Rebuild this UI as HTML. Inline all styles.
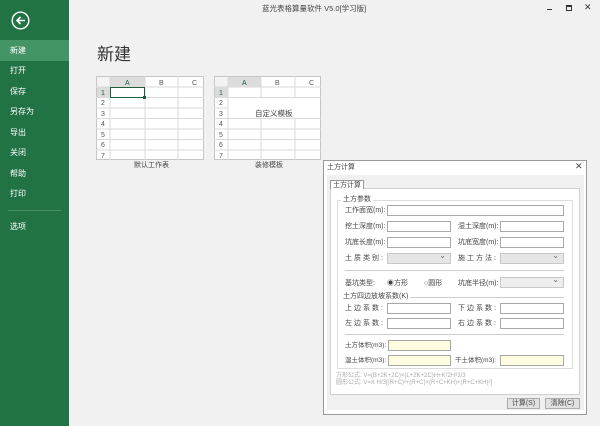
<!DOCTYPE html>
<html><head><meta charset="utf-8"><style>
*{margin:0;padding:0;box-sizing:border-box}
body{width:600px;height:426px;overflow:hidden;background:#f1f1f1;font-family:"Liberation Sans","Noto Sans CJK SC",sans-serif;position:relative;color:#333}
.a{position:absolute}
.side{left:0;top:0;width:69px;height:426px;background:#217346}
.mi{position:absolute;left:10px;font-size:8px;color:#fff;line-height:10px}
.t{font-size:7px;white-space:nowrap;line-height:9px;color:#444}
.in{position:absolute;height:11px;background:#fff;border:1px solid #a8a8a8}
.sel{position:absolute;height:11px;background:#e6e6e6;border:1px solid #c8c8c8}
.sel:after{content:"⌄";position:absolute;right:4px;top:-3px;font-size:8px;color:#666}
.y{background:#fffde0}
</style></head><body>
<div class="a side"></div>
<div class="a" style="left:0;top:40px;width:69px;height:21px;background:#439467"></div>
<svg class="a" style="left:11px;top:11px" width="19" height="19" viewBox="0 0 19 19"><circle cx="9.5" cy="9.5" r="8.3" fill="none" stroke="#fff" stroke-width="1.4"/><path d="M14 9.5H6M9.5 6L6 9.5 9.5 13" fill="none" stroke="#fff" stroke-width="1.6"/></svg>
<div class="mi" style="top:46px">新建</div>
<div class="mi" style="top:66px">打开</div>
<div class="mi" style="top:87px">保存</div>
<div class="mi" style="top:107px">另存为</div>
<div class="mi" style="top:128px">导出</div>
<div class="mi" style="top:148px">关闭</div>
<div class="mi" style="top:169px">帮助</div>
<div class="mi" style="top:189px">打印</div>
<div class="a" style="left:8px;top:210px;width:53px;height:1px;background:#4a8f68"></div>
<div class="mi" style="top:222px">选项</div>
<div class="a t" style="left:262px;top:4px;font-size:7.5px">蓝光表格算量软件 V5.0[学习版]</div>
<div class="a" style="left:547px;top:9px;width:5px;height:1px;background:#333"></div>
<div class="a" style="left:566px;top:5px;width:6px;height:6px;border:1px solid #333;border-top-width:2px"></div>
<div class="a" style="left:584px;top:2px;font-size:9px;color:#333">✕</div>
<div class="a" style="left:97px;top:40px;font-size:17px;color:#333">新建</div>

<svg class="a" style="left:96px;top:76px" width="108" height="84">
<rect x="0.5" y="0.5" width="107" height="83" fill="#fff" stroke="#c6c6c6"/>
<rect x="1" y="1" width="13" height="10" fill="#f3f3f3"/>
<rect x="14" y="1" width="35" height="10" fill="#dcdcdc"/>
<rect x="1" y="11" width="13" height="10" fill="#dcdcdc"/>
<g stroke="#dadada"><line x1="14" y1="0" x2="14" y2="84"/><line x1="49" y1="0" x2="49" y2="84"/><line x1="82" y1="0" x2="82" y2="84"/>
<line x1="0" y1="11" x2="108" y2="11"/><line x1="0" y1="21.5" x2="108" y2="21.5"/><line x1="0" y1="32" x2="108" y2="32"/><line x1="0" y1="42.5" x2="108" y2="42.5"/><line x1="0" y1="53" x2="108" y2="53"/><line x1="0" y1="63.5" x2="108" y2="63.5"/><line x1="0" y1="74" x2="108" y2="74"/></g>
<rect x="14.5" y="11.5" width="34" height="10" fill="none" stroke="#1e5c3a"/><rect x="47" y="20" width="3" height="3" fill="#1e5c3a"/>
<g font-size="7" fill="#555" font-family="Liberation Sans"><text x="29" y="9" fill="#1e5c3a">A</text><text x="63" y="9">B</text><text x="96" y="9">C</text>
<text x="5" y="19" fill="#1e5c3a">1</text><text x="5" y="29">2</text><text x="5" y="40">3</text><text x="5" y="50">4</text><text x="5" y="61">5</text><text x="5" y="71">6</text><text x="5" y="82">7</text></g></svg>
<svg class="a" style="left:214px;top:76px" width="107" height="84">
<rect x="0.5" y="0.5" width="106" height="83" fill="#fff" stroke="#c6c6c6"/>
<rect x="1" y="1" width="13" height="10" fill="#f3f3f3"/>
<rect x="14" y="1" width="33" height="10" fill="#dcdcdc"/>
<rect x="1" y="11" width="13" height="10" fill="#dcdcdc"/>
<g stroke="#dadada"><line x1="14" y1="0" x2="14" y2="84"/><line x1="47" y1="0" x2="47" y2="84"/><line x1="81" y1="0" x2="81" y2="84"/>
<line x1="0" y1="11" x2="107" y2="11"/><line x1="0" y1="21.5" x2="107" y2="21.5"/><line x1="0" y1="32" x2="14" y2="32"/><line x1="0" y1="42.5" x2="107" y2="42.5"/><line x1="0" y1="53" x2="107" y2="53"/><line x1="0" y1="63.5" x2="107" y2="63.5"/><line x1="0" y1="74" x2="107" y2="74"/></g>
<rect x="15" y="22" width="91" height="20" fill="#fff"/>
<g font-size="7" fill="#555" font-family="Liberation Sans"><text x="28" y="9" fill="#1e5c3a">A</text><text x="61" y="9">B</text><text x="95" y="9">C</text>
<text x="5" y="19" fill="#1e5c3a">1</text><text x="5" y="29">2</text><text x="5" y="40">3</text><text x="5" y="50">4</text><text x="5" y="61">5</text><text x="5" y="71">6</text><text x="5" y="82">7</text></g></svg>
<div class="a t" style="left:255px;top:109px;font-size:7.5px">自定义模板</div>
<div class="a t" style="left:134px;top:161px">默认工作表</div>
<div class="a t" style="left:255px;top:161px">装修模板</div>

<div class="a" style="left:323px;top:160px;width:264px;height:255px;background:#fff;border:1px solid #999"></div>
<div class="a t" style="left:327px;top:163px">土方计算</div>
<div class="a" style="left:575px;top:161px;font-size:9px;color:#444">✕</div>
<div class="a" style="left:327px;top:175px;width:257px;height:235px;background:#f0f0f0"></div>
<div class="a" style="left:330px;top:188px;width:250px;height:207px;background:#fff;border:1px solid #d0d0d0"></div>
<div class="a t" style="left:330px;top:180px;border:1px solid #999;border-bottom:none;padding:0 2px;background:#fff;height:9px">土方计算</div>
<div class="a" style="left:337px;top:200px;width:236px;height:169px;border:1px solid #dcdcdc"></div>
<div class="a t" style="left:341px;top:195px;background:#fff;padding:0 2px">土方参数</div>
<div class="a t" style="left:345px;top:206px">工作面宽(m):</div><div class="in" style="left:387px;top:205px;width:177px"></div>
<div class="a t" style="left:345px;top:222px">挖土深度(m):</div><div class="in" style="left:387px;top:221px;width:64px"></div>
<div class="a t" style="left:458px;top:222px">湿土深度(m):</div><div class="in" style="left:500px;top:221px;width:64px"></div>
<div class="a t" style="left:345px;top:238px">坑底长度(m):</div><div class="in" style="left:387px;top:237px;width:64px"></div>
<div class="a t" style="left:458px;top:238px">坑底宽度(m):</div><div class="in" style="left:500px;top:237px;width:64px"></div>
<div class="a t" style="left:345px;top:254px;letter-spacing:2px">土质类别:</div><div class="sel" style="left:387px;top:253px;width:64px"></div>
<div class="a t" style="left:458px;top:254px;letter-spacing:2px">施工方法:</div><div class="sel" style="left:500px;top:253px;width:64px"></div>
<div class="a" style="left:345px;top:270px;width:219px;height:1px;background:#ccc"></div>
<div class="a t" style="left:345px;top:279px">基坑类型:</div>
<div class="a t" style="left:387px;top:279px">◉方形</div>
<div class="a t" style="left:424px;top:279px">○圆形</div>
<div class="a t" style="left:458px;top:279px">坑底半径(m):</div><div class="sel" style="left:500px;top:277px;width:64px;background:#eee"></div>
<div class="a" style="left:345px;top:297px;width:219px;height:1px;background:#ccc"></div>
<div class="a t" style="left:343px;top:292px;background:#fff;padding-right:2px">土方四边放坡系数(K)</div>
<div class="a t" style="left:345px;top:304px;letter-spacing:2px">上边系数:</div><div class="in" style="left:387px;top:303px;width:64px"></div>
<div class="a t" style="left:458px;top:304px;letter-spacing:2px">下边系数:</div><div class="in" style="left:500px;top:303px;width:64px"></div>
<div class="a t" style="left:345px;top:319px;letter-spacing:2px">左边系数:</div><div class="in" style="left:387px;top:318px;width:64px"></div>
<div class="a t" style="left:458px;top:319px;letter-spacing:2px">右边系数:</div><div class="in" style="left:500px;top:318px;width:64px"></div>
<div class="a" style="left:345px;top:334px;width:219px;height:1px;background:#ccc"></div>
<div class="a t" style="left:345px;top:341px;font-size:6.5px">土方体积(m3):</div><div class="in y" style="left:388px;top:340px;width:63px"></div>
<div class="a t" style="left:345px;top:356px;font-size:6.5px">湿土体积(m3):</div><div class="in y" style="left:388px;top:355px;width:63px"></div>
<div class="a t" style="left:455px;top:356px;font-size:6.5px">干土体积(m3):</div><div class="in y" style="left:500px;top:355px;width:64px"></div>
<div class="a t" style="left:336px;top:373px;font-size:6px;line-height:7px;color:#aaa">方形公式: V=(B+2K+2C)×(L+2K+2C)H+K²2H³3/3<br>圆形公式: V=π H/3[(R+C)²+(R+C)×(R+C+KH)+(R+C+KH)²]</div>
<div class="a t" style="left:507px;top:398px;width:33px;height:11px;border:1px solid #adadad;background:#e1e1e1;text-align:center;line-height:9px">计算(S)</div>
<div class="a t" style="left:545px;top:398px;width:35px;height:11px;border:1px solid #adadad;background:#e1e1e1;text-align:center;line-height:9px">清除(C)</div>
</body></html>
